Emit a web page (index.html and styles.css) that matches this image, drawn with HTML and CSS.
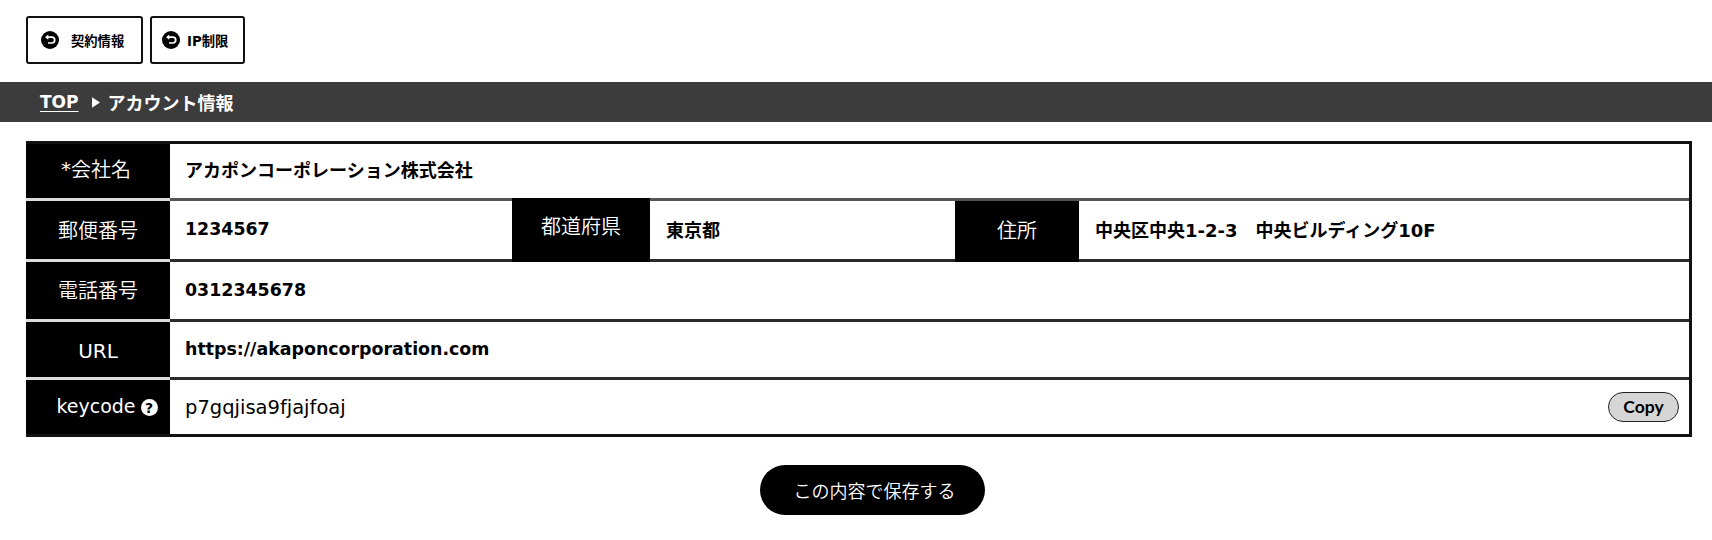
FILE: index.html
```html
<!DOCTYPE html>
<html lang="ja">
<head>
<meta charset="utf-8">
<title>アカウント情報</title>
<link rel="stylesheet" href="styles.css">
</head>
<body>
<nav class="top-nav">
  <a class="nav-btn nav-btn-a"><svg class="back-icon" viewBox="0 0 20 20"><circle cx="10" cy="10" r="9" fill="#000"/><path d="M7.5 7.2h4.3a2.9 2.9 0 0 1 0 5.8H8" fill="none" stroke="#fff" stroke-width="1.7"/><path d="M8.3 4.6 5 7.2l3.3 2.6z" fill="#fff"/></svg><span>契約情報</span></a>
  <a class="nav-btn nav-btn-b"><svg class="back-icon" viewBox="0 0 20 20"><circle cx="10" cy="10" r="9" fill="#000"/><path d="M7.5 7.2h4.3a2.9 2.9 0 0 1 0 5.8H8" fill="none" stroke="#fff" stroke-width="1.7"/><path d="M8.3 4.6 5 7.2l3.3 2.6z" fill="#fff"/></svg><span>IP制限</span></a>
</nav>
<div class="crumb-bar">
  <a class="crumb-link">TOP</a>
  <svg class="crumb-arrow" viewBox="0 0 9 12"><path d="M0 0l9 6-9 6z" fill="#fff"/></svg>
  <span>アカウント情報</span>
</div>
<main class="content">
  <div class="info-table">
    <div class="row row-1">
      <div class="label label-company"><span class="req">*</span>会社名</div>
      <div class="value">アカポンコーポレーション株式会社</div>
    </div>
    <div class="row row-2">
      <div class="label">郵便番号</div>
      <div class="value value-zip value-latin">1234567</div>
      <div class="label label-pref">都道府県</div>
      <div class="value value-pref">東京都</div>
      <div class="label label-addr">住所</div>
      <div class="value value-addr">中央区中央1-2-3　中央ビルディング10F</div>
    </div>
    <div class="row row-3">
      <div class="label">電話番号</div>
      <div class="value value-latin">0312345678</div>
    </div>
    <div class="row row-4">
      <div class="label label-url">URL</div>
      <div class="value value-latin">https://akaponcorporation.com</div>
    </div>
    <div class="row row-5">
      <div class="label label-key">keycode <span class="help">?</span></div>
      <div class="value value-key"><span>p7gqjisa9fjajfoaj</span><button class="copy-btn">Copy</button></div>
    </div>
  </div>
  <div class="actions"><button class="save-btn">この内容で保存する</button></div>
</main>
</body>
</html>
```
FILE: styles.css
```css
* { box-sizing: border-box; }
html, body { margin: 0; padding: 0; }
body {
  width: 1712px;
  height: 540px;
  overflow: hidden;
  background: #fff;
  color: #000;
  font-family: "DejaVu Sans", "Noto Sans CJK JP", sans-serif;
}
.top-nav {
  display: flex;
  gap: 7px;
  height: 82px;
  padding: 16px 26px 0;
}
.nav-btn {
  display: flex;
  align-items: center;
  height: 48px;
  border: 2px solid #111;
  border-radius: 3px;
  font-size: 13.3px;
  font-weight: 700;
}
.nav-btn-a { width: 117px; padding-left: 12px; gap: 11px; }
.nav-btn-b { width: 95px; padding-left: 9px; gap: 6px; }
.back-icon { width: 20px; height: 20px; flex: none; }
.crumb-bar {
  display: flex;
  align-items: center;
  height: 40px;
  padding-left: 40px;
  background: #3c3c3c;
  color: #fff;
  font-size: 18px;
  font-weight: 700;
}
.crumb-link { font-size: 17px; text-decoration: underline; text-underline-offset: 3px; }
.crumb-arrow { width: 8px; height: 11px; margin: 0 8px 0 13px; }
.content { padding: 19px 20px 0 26px; }
.info-table {
  width: 1666px;
  border: 3px solid #111;
  border-left: 0;
}
.row { display: flex; border-bottom: 3px solid #2a2a2a; }
.row-1 { height: 57px; border-bottom-color: #555; }
.row-2 { height: 61px; }
.row-3 { height: 60px; }
.row-4 { height: 58px; }
.row-5 { height: 54px; border-bottom: 0; }
.label {
  display: flex;
  align-items: center;
  justify-content: center;
  flex: none;
  width: 144px;
  margin-bottom: -3px;
  padding-bottom: 2px;
  border-bottom: 3px solid #ddd;
  background: #000;
  color: #fff;
  font-size: 20px;
  font-weight: 350;
}
.row-5 .label { margin-bottom: 0; border-bottom: 0; }
.row-1 .label, .row-1 .value { padding-bottom: 5px; }
.label-company { padding-right: 4px; }
.req { font-weight: 400; }
.label-pref { width: 138px; margin-top: -3px; border-bottom-color: #000; padding-bottom: 6px; }
.label-addr { width: 124px; border-bottom-color: #000; }
.label-url { padding-top: 2px; padding-bottom: 0; font-weight: 400; }
.label-key { gap: 5px; padding-left: 18px; font-size: 19px; font-weight: 400; }
.help {
  display: inline-flex;
  align-items: center;
  justify-content: center;
  width: 17px;
  height: 17px;
  margin-top: 3px;
  border-radius: 50%;
  background: #fff;
  color: #000;
  font-size: 14px;
  font-weight: 700;
}
.value {
  display: flex;
  align-items: center;
  flex: 1;
  padding-left: 15px;
  padding-bottom: 2px;
  font-size: 18px;
  font-weight: 700;
}
.value-latin { font-size: 17.4px; }
.value-zip { flex: none; width: 342px; }
.value-pref { flex: none; width: 305px; padding-left: 16px; }
.value-addr { padding-left: 16px; }
.value-key {
  justify-content: space-between;
  padding-right: 10px;
  padding-bottom: 0;
  font-size: 19.5px;
  font-weight: 400;
}
.copy-btn {
  width: 71px;
  height: 30px;
  padding: 0 0 2px;
  border: 1px solid #222;
  border-radius: 15px;
  background: #d6d6d6;
  color: #000;
  font-family: "Lato", sans-serif;
  font-size: 17.5px;
  font-weight: 700;
}
.actions { display: flex; justify-content: center; padding: 28px 0 0 27px; }
.save-btn {
  width: 225px;
  height: 50px;
  padding: 0 0 0 4px;
  border: 0;
  border-radius: 25px;
  background: #000;
  color: #fff;
  font-family: inherit;
  font-size: 18px;
  font-weight: 350;
}
```
